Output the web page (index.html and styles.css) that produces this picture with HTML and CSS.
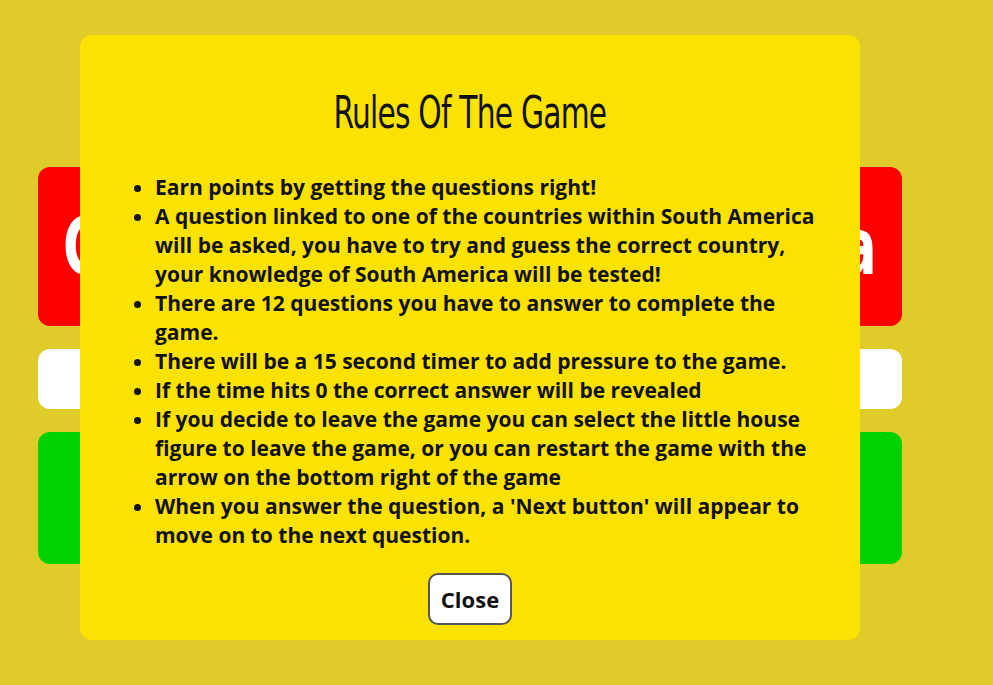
FILE: index.html
```html
<!DOCTYPE html>
<html lang="en">
<head>
<meta charset="utf-8">
<title>South America Quiz</title>
<link rel="stylesheet" href="styles.css">
</head>
<body>
<main class="game">
  <div class="question-box"><span class="question-text">Countries Of South America</span></div>
  <div class="answer-box"></div>
  <div class="options-box"></div>
</main>

<div class="modal">
  <h2 class="modal-title">Rules Of The Game</h2>
  <ul class="rules">
    <li>Earn points by getting the questions right!</li>
    <li>A question linked to one of the countries within South America will be asked, you have to try and guess the correct country, your knowledge of South America will be tested!</li>
    <li>There are 12 questions you have to answer to complete the game.</li>
    <li>There will be a 15 second timer to add pressure to the game.</li>
    <li>If the time hits 0 the correct answer will be revealed</li>
    <li>If you decide to leave the game you can select the little house figure to leave the game, or you can restart the game with the arrow on the bottom right of the game</li>
    <li>When you answer the question, a 'Next button' will appear to move on to the next question.</li>
  </ul>
  <button class="close-btn" type="button">Close</button>
</div>
</body>
</html>
```
FILE: styles.css
```css
* { box-sizing: border-box; }

html, body {
  margin: 0;
  padding: 0;
}

body {
  background: #dfcb2a;
  width: 993px;
  height: 685px;
  overflow: hidden;
  font-family: "Open Sans", "Noto Sans", sans-serif;
}

.game {
  width: 864px;
  margin-left: 38px;
  padding-top: 167px;
  display: flex;
  flex-direction: column;
  gap: 23px;
}

.question-box {
  height: 159px;
  background: #ff0000;
  border-radius: 12px;
  display: flex;
  align-items: center;
  justify-content: center;
  overflow: hidden;
}

.question-text {
  display: inline-block;
  flex: none;
  color: #ffffff;
  font-family: "DejaVu Sans Condensed", sans-serif;
  font-weight: 700;
  font-size: 78px;
  line-height: 1;
  white-space: nowrap;
  transform: scaleX(0.74);
}

.answer-box {
  height: 60px;
  background: #ffffff;
  border-radius: 12px;
}

.options-box {
  height: 132px;
  background: #00d100;
  border-radius: 12px;
}

.modal {
  position: absolute;
  left: 80px;
  top: 35px;
  width: 780px;
  height: 605px;
  background: #fce200;
  border-radius: 12px;
  padding: 54px 30px 15px 35px;
  display: flex;
  flex-direction: column;
  align-items: center;
}

.modal-title {
  margin: 0 0 0 -5px;
  font-family: "DejaVu Sans Condensed", sans-serif;
  font-weight: 400;
  font-size: 44px;
  line-height: 48px;
  letter-spacing: -1px;
  white-space: nowrap;
  color: #111;
  transform: scaleX(0.75);
}

.rules {
  align-self: stretch;
  margin: 36px 0 0 0;
  padding-left: 40px;
  font-weight: 700;
  font-size: 21px;
  line-height: 29px;
  color: #111;
}

.close-btn {
  margin-top: 23px;
  margin-left: -5px;
  height: 52px;
  padding: 0 11px;
  background: #ffffff;
  border: 2px solid #555;
  border-radius: 10px;
  font-family: "Open Sans", "Noto Sans", sans-serif;
  font-weight: 700;
  font-size: 22px;
  color: #111;
}
```
